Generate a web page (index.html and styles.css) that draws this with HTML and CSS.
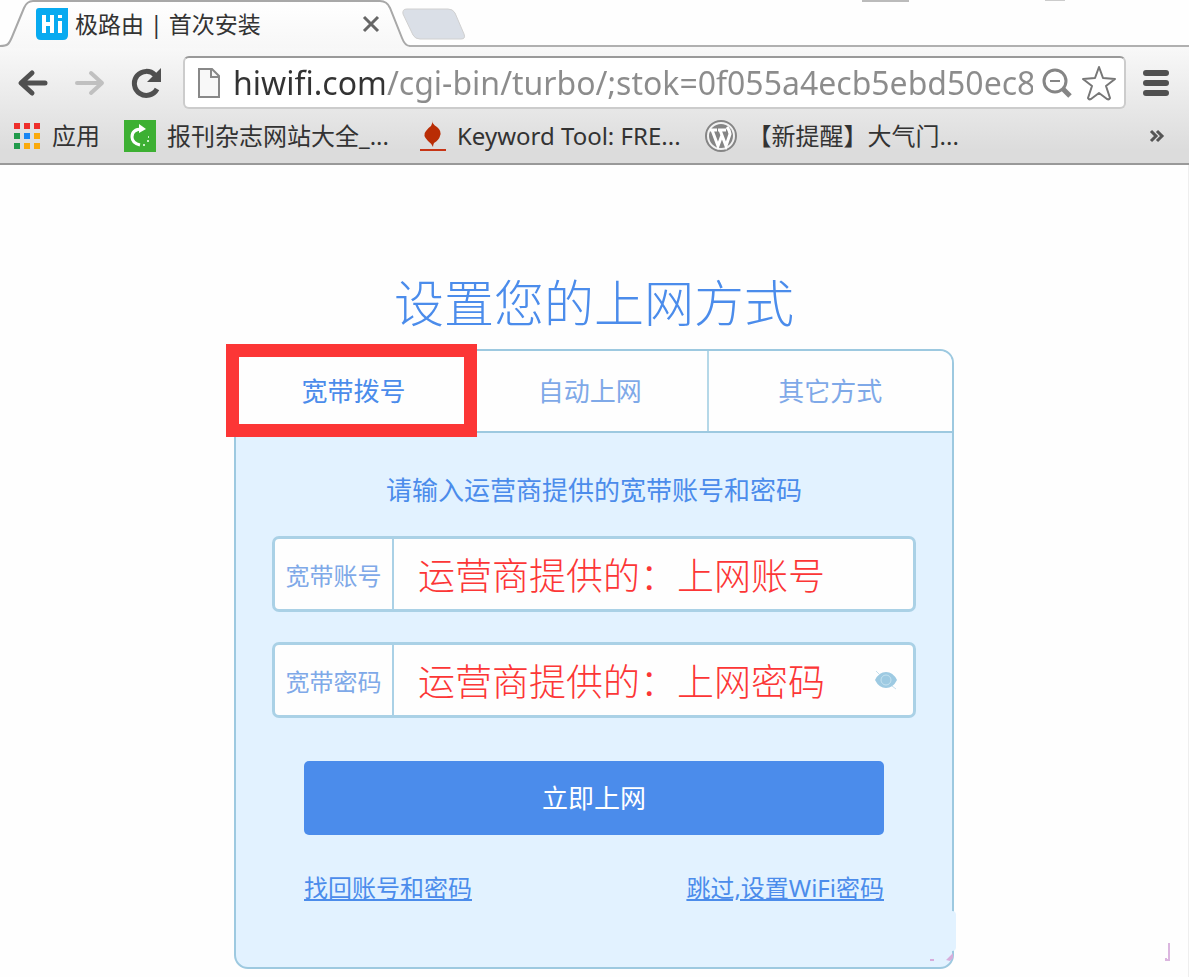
FILE: index.html
```
<!DOCTYPE html>
<html lang="zh-CN">
<head>
    <meta charset="UTF-8">
    <meta name="viewport" content="width=device-width, initial-scale=1.0">
    <title>极路由 | 首次安装</title>
    <link rel="stylesheet" href="styles.css">
</head>
<body>
    <header class="browser">
        <div class="tab-strip">
            <div class="tab">
                <svg class="tab-shape" viewBox="0 0 410 48" aria-hidden="true">
                    <defs>
                        <linearGradient id="tabFill" x1="0" y1="0" x2="0" y2="1">
                            <stop offset="0" stop-color="#ffffff"/>
                            <stop offset="1" stop-color="#f7f7f7"/>
                        </linearGradient>
                    </defs>
                    <path d="M0 46C8 46 9 44 12 37L24 8Q27 1 33 1H380Q387 1 390 8L402 38Q405 46 410 46V48H0Z" fill="url(#tabFill)"/>
                    <path d="M0 46C8 46 9 44 12 37L24 8Q27 1 33 1H380Q387 1 390 8L402 38Q405 46 410 46" fill="none" stroke="#a8a8a8" stroke-width="2"/>
                </svg>
                <svg class="favicon" viewBox="0 0 32 32" aria-hidden="true">
                    <path d="M3 0H32V27Q32 32 27 32H5Q0 32 0 27V3Q0 0 3 0Z" fill="#08aaf0"/>
                    <path d="M8 7V25M16 7V25M8 16H16M24 13V25M24 7V10" fill="none" stroke="#fff" stroke-width="4"/>
                </svg>
                <span class="tab-title">极路由 | 首次安装</span>
                <button class="icon-button tab-close" aria-label="关闭标签页">
                    <svg width="18" height="18" viewBox="0 0 18 18"><path d="M2 2L16 16M16 2L2 16" stroke="#666" stroke-width="3"/></svg>
                </button>
            </div>
            <button class="icon-button new-tab" aria-label="新标签页">
                <svg width="64" height="32" viewBox="0 0 64 32"><path d="M5 1H46Q51 1 53 5L62 26Q64 31 59 31H18Q13 31 11 27L1 6Q0 1 5 1Z" fill="#dadfe7" stroke="#d0d0d0"/></svg>
            </button>
            <div class="window-controls">
                <span class="window-control dark"></span>
                <span class="window-control"></span>
            </div>
        </div>

        <div class="toolbar">
            <nav class="nav-buttons">
                <button class="icon-button" aria-label="后退">
                    <svg width="32" height="30" viewBox="0 0 32 30"><path d="M28 15H5M15 5L4 15L15 25" fill="none" stroke="#505050" stroke-width="5" stroke-linecap="round" stroke-linejoin="round"/></svg>
                </button>
                <button class="icon-button" aria-label="前进">
                    <svg width="32" height="30" viewBox="0 0 32 30"><path d="M3 15H27M17 5L28 15L17 25" fill="none" stroke="#c0c0c0" stroke-width="4" stroke-linecap="round" stroke-linejoin="round"/></svg>
                </button>
                <button class="icon-button" aria-label="重新加载">
                    <svg width="32" height="32" viewBox="0 0 32 32"><path d="M26 22A12 12 0 1 1 24 8" fill="none" stroke="#505050" stroke-width="5"/><path d="M30 1V15H16Z" fill="#505050"/></svg>
                </button>
            </nav>
            <div class="address-bar">
                <svg width="24" height="32" viewBox="0 0 24 32" aria-hidden="true"><path d="M2 2H15L22 9V30H2Z" fill="#f8f8f8" stroke="#888" stroke-width="2"/><path d="M14 2V10H22" fill="none" stroke="#888" stroke-width="2"/></svg>
                <input class="address-input" type="text" aria-label="地址" value="hiwifi.com/cgi-bin/turbo/;stok=0f055a4ecb5ebd50ec8">
                <button class="icon-button" aria-label="缩放">
                    <svg width="32" height="32" viewBox="0 0 32 32"><circle cx="14" cy="14" r="11" fill="none" stroke="#858585" stroke-width="3"/><path d="M9 14H19" stroke="#858585" stroke-width="2"/><path d="M22 22L29 29" stroke="#858585" stroke-width="5"/></svg>
                </button>
                <button class="icon-button" aria-label="收藏">
                    <svg width="36" height="36" viewBox="0 0 36 36"><path d="M18 2L22 13L34 14L25 21L29 33Q28 35 26 34L18 28L10 34Q8 35 7 33L11 21L2 14L14 13Z" fill="#fff" stroke="#777" stroke-width="2" stroke-linejoin="round"/></svg>
                </button>
            </div>
            <button class="icon-button menu-button" aria-label="菜单">
                <svg width="26" height="28" viewBox="0 0 26 28"><path d="M3 4H23M3 14H23M3 24H23" stroke="#505050" stroke-width="6" stroke-linecap="round"/></svg>
            </button>
        </div>

        <nav class="bookmarks">
            <a class="bookmark apps" href="#">
                <svg width="28" height="28" viewBox="0 0 28 28" aria-hidden="true">
                    <path d="M1 1h6v6h-6zM11 1h6v6h-6zM21 1h6v6h-6z" fill="#ee2f2c"/>
                    <path d="M1 11h6v6h-6zM1 21h6v6h-6z" fill="#219a4b"/>
                    <path d="M11 11h6v6h-6z" fill="#1a86f4"/>
                    <path d="M21 11h6v6h-6zM11 21h6v6h-6zM21 21h6v6h-6z" fill="#faaa0c"/>
                </svg>
                应用
            </a>
            <a class="bookmark magazines" href="#">
                <svg width="32" height="32" viewBox="0 0 32 32" aria-hidden="true">
                    <rect width="32" height="32" fill="#3db033"/>
                    <path d="M18 9Q8 9 8 17Q8 23 16 25" fill="none" stroke="#fff" stroke-width="3"/>
                    <path d="M15 4L22 9L15 13Z" fill="#fff"/>
                    <path d="M19 25h2M23 21h2M24 17h1" stroke="#c9efc5" stroke-width="2"/>
                </svg>
                报刊杂志网站大全_...
            </a>
            <a class="bookmark keyword" href="#">
                <svg width="26" height="32" viewBox="0 0 26 32" aria-hidden="true">
                    <path d="M12 0Q12 4 17 7Q22 11 20 16Q19 20 14 23Q13 25 13 27Q12 24 8 21Q2 15 6 11Q8 8 11 6Q13 3 12 0Z" fill="#b92d05"/>
                    <path d="M0 30H26" stroke="#c73516" stroke-width="2"/>
                </svg>
                Keyword Tool: FRE...
            </a>
            <a class="bookmark wordpress" href="#">
                <svg width="32" height="32" viewBox="0 0 32 32" aria-hidden="true">
                    <circle cx="16" cy="16" r="15" fill="#f2f2f2" stroke="#858585" stroke-width="2"/>
                    <circle cx="16" cy="16" r="12" fill="#858585"/>
                    <path d="M5 10H12M13 10H21M7 10L13 26L17 15M15 10L21 26L25 14Q25 11 22 7" fill="none" stroke="#fff" stroke-width="3"/>
                </svg>
                【新提醒】大气门...
            </a>
            <button class="icon-button more-bookmarks" aria-label="更多书签">
                <svg width="16" height="14" viewBox="0 0 16 14"><path d="M2 2L7 7L2 12M8 2L13 7L8 12" fill="none" stroke="#555" stroke-width="3"/></svg>
            </button>
        </nav>
    </header>

    <main class="page">
        <h1 class="page-title">设置您的上网方式</h1>
        <form class="card">
            <div class="methods">
                <button type="button" class="method active">宽带拨号</button>
                <button type="button" class="method">自动上网</button>
                <button type="button" class="method">其它方式</button>
            </div>
            <div class="card-body">
                <p class="hint">请输入运营商提供的宽带账号和密码</p>
                <div class="field">
                    <label class="field-label" for="account">宽带账号</label>
                    <input class="field-input" id="account" type="text" value="运营商提供的：上网账号">
                </div>
                <div class="field">
                    <label class="field-label" for="password">宽带密码</label>
                    <input class="field-input" id="password" type="text" value="运营商提供的：上网密码">
                    <button type="button" class="icon-button toggle-password" aria-label="显示密码">
                        <svg width="24" height="20" viewBox="0 0 24 20"><path d="M1 10Q5 2 12 2T23 10Q19 18 12 18T1 10Z" fill="#9dcae2"/><circle cx="12" cy="10" r="5" fill="none" stroke="#c5e2f0" stroke-width="1"/><path d="M2 1L5 4M18 16L22 19" stroke="#c5dfed"/></svg>
                    </button>
                </div>
                <div class="actions">
                    <button type="button" class="submit">立即上网</button>
                    <div class="links">
                        <a href="#">找回账号和密码</a>
                        <a href="#">跳过,设置WiFi密码</a>
                    </div>
                </div>
            </div>
            <span class="edge-patch"></span>
            <svg class="corner-mark" width="24" height="8" viewBox="0 0 24 8" aria-hidden="true"><path d="M0 6h4v2h-4zM16 7L23 0V5L20 8Z" fill="#d7addb"/></svg>
        </form>
        <svg class="side-mark" width="6" height="18" viewBox="0 0 6 18" aria-hidden="true"><path d="M4 0V17H1V15" fill="none" stroke="#dbb6df" stroke-width="2"/></svg>
    </main>
</body>
</html>
```

FILE: styles.css
```
* {
    box-sizing: border-box;
}

body {
    margin: 0;
    background-color: #fefefe;
    font-family: "Noto Sans", "Noto Sans CJK SC", sans-serif;
    color: #333;
}

button, input {
    font-family: inherit;
}

svg {
    display: block;
    flex-shrink: 0;
}

.icon-button {
    display: flex;
    flex-shrink: 0;
    padding: 0;
    border: none;
    background: none;
    cursor: pointer;
}

/* Browser tabs */
.browser {
    border-bottom: 2px solid #999;
    background: linear-gradient(#f8f8f8 48px, #dcdcdc 150px);
}

.tab-strip {
    display: flex;
    height: 47px;
    background-color: #fefefe;
    box-shadow: inset 0 -2px #b0b0b0;
}

.tab {
    position: relative;
    display: flex;
    align-items: center;
    width: 410px;
    padding: 0 30px 0 36px;
}

.tab-shape {
    position: absolute;
    top: 0;
    left: 0;
    width: 410px;
    height: 48px;
}

.favicon {
    position: relative;
    width: 32px;
    height: 32px;
    margin-right: 7px;
}

.tab-title {
    position: relative;
    flex: 1;
    font-size: 23px;
    line-height: 32px;
    white-space: nowrap;
}

.tab-close {
    position: relative;
}

.new-tab {
    align-self: center;
    margin-left: -8px;
}

.window-controls {
    display: flex;
    gap: 136px;
    margin-left: auto;
    padding-right: 124px;
}

.window-control {
    width: 20px;
    height: 1px;
    background-color: #ccc;
}

.window-control.dark {
    width: 47px;
    height: 2px;
    background-color: #bbb;
}

/* Toolbar */
.toolbar {
    display: flex;
    align-items: center;
    padding: 9px 20px 0 17px;
}

.nav-buttons {
    display: flex;
    align-items: center;
    gap: 25px;
    width: 166px;
}

.address-bar {
    display: flex;
    flex: 1;
    align-items: center;
    gap: 8px;
    min-width: 0;
    height: 53px;
    padding: 0 7px 0 12px;
    border: 2px solid #ccc;
    border-top-color: #999;
    border-radius: 6px;
    background-color: #fff;
}

.address-input {
    flex: 1;
    min-width: 0;
    padding: 0 0 0 4px;
    border: none;
    outline: none;
    font-size: 32px;
    line-height: 44px;
    /* domain dark, path grey */
    color: transparent;
    background: linear-gradient(90deg, #333 155px, #8c8c8c 155px);
    background-clip: text;
    -webkit-background-clip: text;
}

.menu-button {
    margin-left: 17px;
}

/* Bookmarks */
.bookmarks {
    display: flex;
    align-items: center;
    gap: 24px;
    height: 54px;
    padding: 0 24px 0 13px;
}

.bookmark {
    display: flex;
    align-items: center;
    gap: 11px;
    color: #333;
    font-size: 24px;
    line-height: 32px;
    text-decoration: none;
    white-space: nowrap;
}

.bookmark.magazines {
    min-width: 272px;
}

.more-bookmarks {
    margin-left: auto;
}

/* Setup page */
.page {
    position: relative;
    display: flex;
    flex-direction: column;
    align-items: center;
    padding: 102px 24px 8px;
    border-right: 1px solid #eee;
    color: #4b8ceb;
}

.page-title {
    margin: 0 0 10px;
    font-size: 50px;
    font-weight: 300;
    line-height: 72px;
}

.card {
    position: relative;
    width: 100%;
    max-width: 720px;
    border: 2px solid #9dc9e0;
    border-radius: 14px;
    background-color: #e2f2ff;
}

.methods {
    display: grid;
    grid-template-columns: 23fr 23fr 24fr;
    border-bottom: 2px solid #9dc9e0;
    border-radius: 12px 12px 0 0;
    background-color: #fefefe;
}

.method {
    position: relative;
    height: 80px;
    padding: 0 0 3px;
    border: none;
    border-left: 2px solid #b5d8e8;
    background: none;
    color: #7fa9e8;
    font-size: 26px;
    cursor: pointer;
}

.method.active {
    z-index: 1;
    border-left: none;
    color: #4b8ceb;
}

.method.active::after {
    content: "";
    position: absolute;
    inset: -7px -6px -6px -10px;
    border: 13px solid #fc3636;
}

.card-body {
    padding: 37px 36px 61px;
}

.hint {
    margin: 0 0 26px;
    font-size: 26px;
    line-height: 40px;
    text-align: center;
}

.field {
    display: flex;
    align-items: stretch;
    height: 76px;
    margin-bottom: 30px;
    border: 3px solid #aad1e6;
    border-radius: 7px;
    background-color: #fefefe;
}

.field-label {
    display: flex;
    align-items: center;
    justify-content: center;
    width: 119px;
    border-right: 2px solid #aad1e6;
    color: #7fa9e8;
    font-size: 24px;
}

.field-input {
    flex: 1;
    min-width: 0;
    padding: 0 0 0 24px;
    border: none;
    outline: none;
    background: none;
    color: #fc3636;
    font-size: 37px;
    font-weight: 300;
}

.toggle-password {
    align-items: center;
    padding: 0 15px;
}

.actions {
    padding: 13px 32px 0;
}

.submit {
    width: 100%;
    height: 74px;
    padding: 0 0 3px;
    border: none;
    border-radius: 5px;
    background-color: #4b8ceb;
    color: #fff;
    font-size: 26px;
    cursor: pointer;
}

.links {
    display: flex;
    justify-content: space-between;
    margin-top: 35px;
    font-size: 24px;
    line-height: 36px;
}

.links a {
    color: #4b8ceb;
}

/* Marks over the lower right corner */
.edge-patch {
    position: absolute;
    right: -4px;
    bottom: 16px;
    width: 8px;
    height: 40px;
    border-radius: 0 4px 4px 0;
    background-color: #e2f2ff;
}

.corner-mark {
    position: absolute;
    right: -2px;
    bottom: 6px;
}

.side-mark {
    position: absolute;
    right: 17px;
    bottom: 16px;
}
```
